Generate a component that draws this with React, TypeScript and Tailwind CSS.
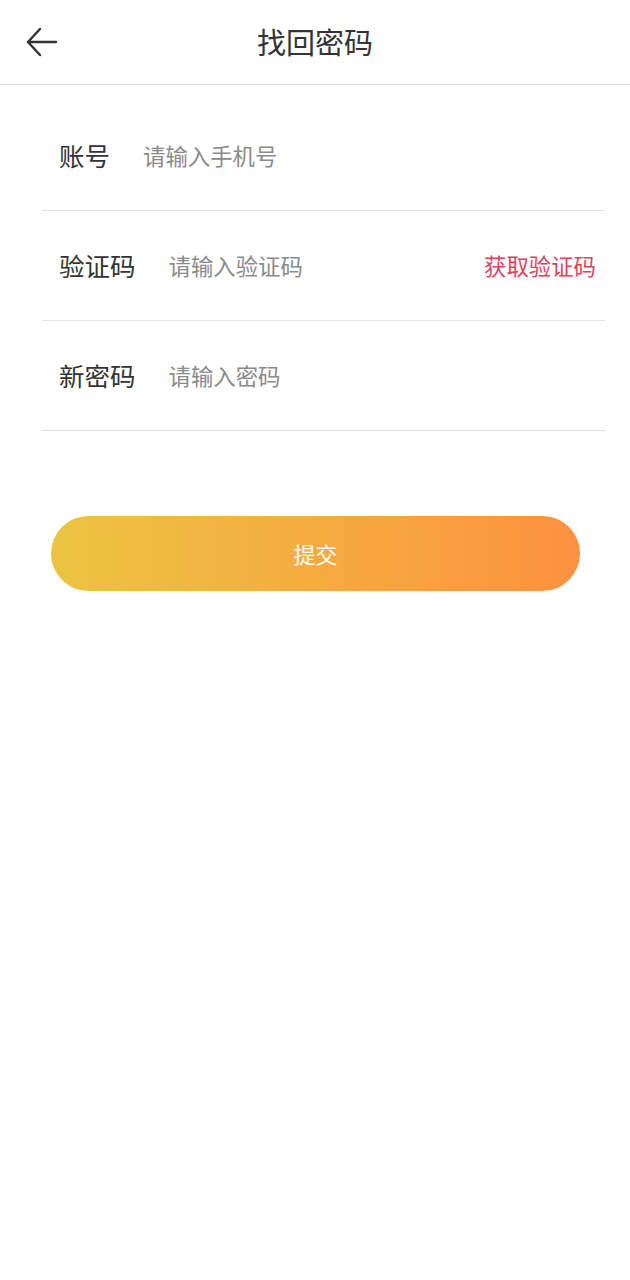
import { useState } from "react";

const FONT = { fontFamily: '"Noto Sans CJK SC", "Noto Sans", sans-serif' };

type FieldProps = {
  label: string;
  placeholder: string;
  action?: string;
};

function Field({ label, placeholder, action }: FieldProps) {
  const [value, setValue] = useState("");
  return (
    <div className="ml-[42px] mr-[25px] flex h-[110px] items-center border-b border-[#e3e3e3] pl-[17px] pr-[9px]">
      <span className="mr-[33px] shrink-0 text-[25.5px] text-[#333]">{label}</span>
      <input
        value={value}
        onChange={(e) => setValue(e.target.value)}
        placeholder={placeholder}
        className="min-w-0 flex-1 bg-transparent text-[22.4px] text-[#333] outline-none placeholder:text-[#8a8a8a]"
      />
      {action && <button className="shrink-0 text-[22.4px] text-[#d9435b]">{action}</button>}
    </div>
  );
}

export default function App() {
  return (
    <div className="min-h-[1280px] w-full bg-white" style={FONT}>
      <header className="relative flex h-[85px] items-center justify-center border-b border-[#dcdcdc]">
        <button className="absolute left-[25px] top-[26px] p-0">
          <svg width="34" height="32" viewBox="0 0 34 32" fill="none" stroke="#333" strokeWidth="2.4" strokeLinecap="round" strokeLinejoin="round">
            <path d="M31 16H3" />
            <path d="M15 3L3 16l12 13" />
          </svg>
        </button>
        <h1 className="text-[29px] font-normal text-[#333]">找回密码</h1>
      </header>

      <div className="pt-[16px]">
        <Field label="账号" placeholder="请输入手机号" />
        <Field label="验证码" placeholder="请输入验证码" action="获取验证码" />
        <Field label="新密码" placeholder="请输入密码" />
      </div>

      <div className="pl-[51px] pr-[50px] pt-[85px]">
        <button className="flex h-[75px] w-full items-center justify-center rounded-full bg-gradient-to-r from-[#ecc441] to-[#fc913f] text-[22px] text-white">
          提交
        </button>
      </div>
    </div>
  );
}
